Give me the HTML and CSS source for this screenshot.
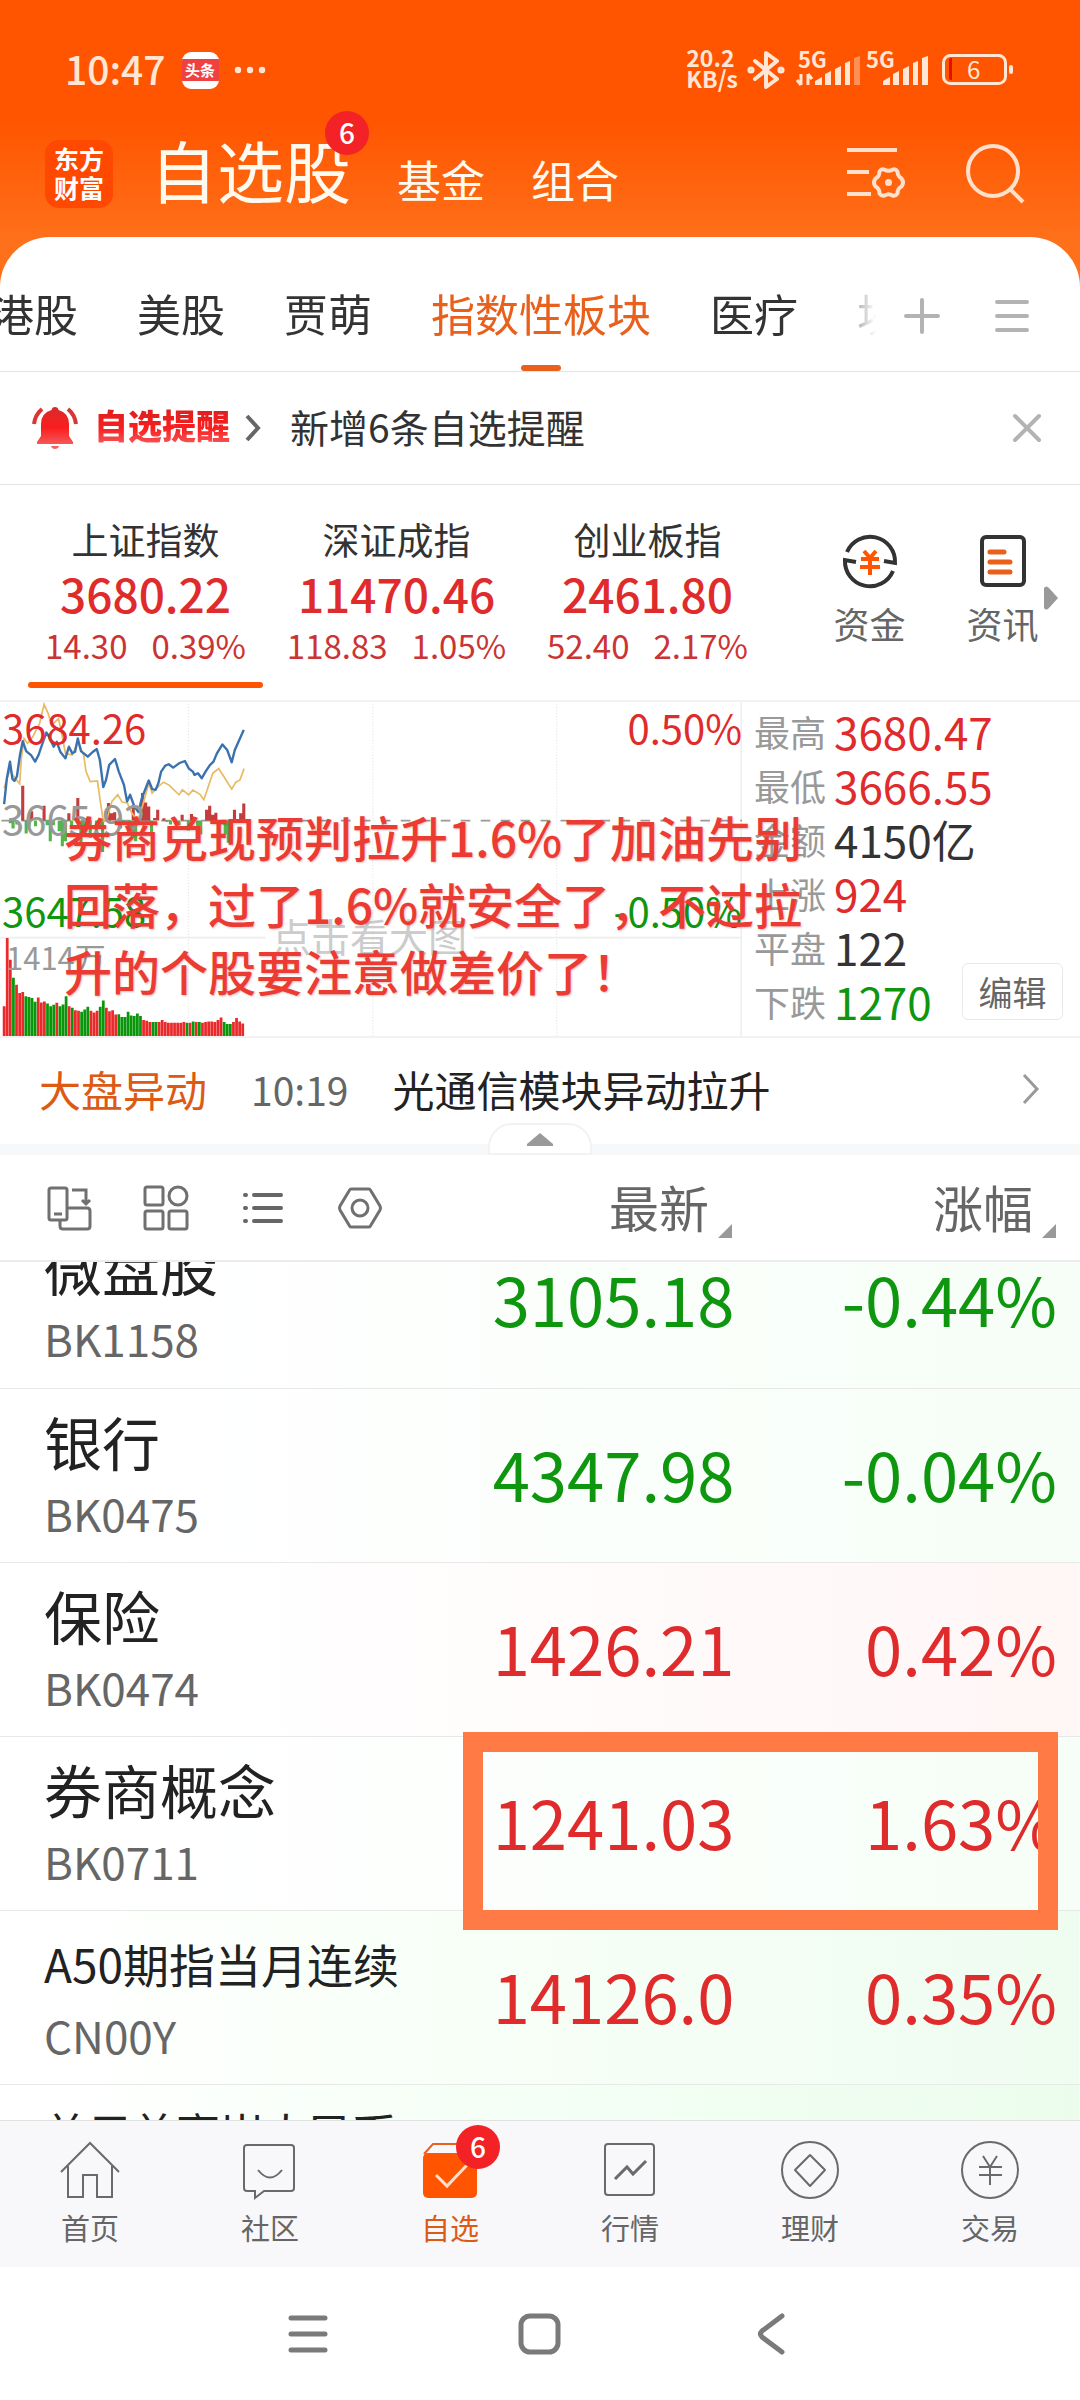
FILE: index.html
```html
<!DOCTYPE html>
<html lang="zh-CN">
<head>
<meta charset="utf-8">
<meta name="viewport" content="width=device-width, initial-scale=1">
<title>自选股</title>
<link rel="stylesheet" href="styles.css">
</head>
<body>
<div class="app">
  <header class="top">
    <div class="status">
      <span class="clock">10:47</span>
      <span class="toutiao"><span class="toutiao-band">头条</span></span>
      <svg class="dots" width="32" height="8" viewBox="0 0 32 8" fill="#ffe6d5"><circle cx="4" cy="4" r="3.2"/><circle cx="16" cy="4" r="3.2"/><circle cx="28" cy="4" r="3.2"/></svg>
      <span class="speed">20.2<br>KB/s</span>
      <svg class="bt" width="38" height="42" viewBox="0 0 38 42" fill="none" stroke="#ffe6d5" stroke-width="4" stroke-linejoin="round" stroke-linecap="round"><path d="M8 12l22 18-11 8V4l11 8L8 30"/><circle cx="4" cy="21" r="1.6"/><circle cx="34" cy="21" r="1.6"/></svg>
      <svg width="220" height="40" viewBox="0 0 220 40" fill="#ffe6d5" overflow="visible">
        <g class="net"><text x="3" y="18">5G</text><text x="71" y="18">5G</text></g>
        <path d="M6 24v11M6 35l-4-5M13 35V24M13 24l4 5" stroke="#ffe6d5" stroke-width="3" fill="none"/>
        <path d="M20 35v-4l7-4v8zM30 35V24l6-3v14zM40 35V19l6-3v19zM50 35V13l5-2v24zM88 35v-4l7-4v8zM98 35V24l6-3v14zM108 35V19l6-3v19zM118 35V13l5-2v24zM127 35V8l6-2v29z"/>
        <path d="M59 35V8l6-2v29z" opacity=".4"/>
        <rect x="148.500" y="5.500" width="62" height="28" rx="7" fill="none" stroke="#ffe6d5" stroke-width="3"/>
        <path d="M154 10q0-2 3-2v22q-3 0-3-2z" fill="#e60f00"/><rect x="214" y="15" width="4" height="9" rx="2"/>
        <text x="172" y="29" font-size="24">6</text>
      </svg>
    </div>
    <div class="title-bar">
      <span class="logo">东方<br>财富</span>
      <nav class="sections">
        <a class="section section-on" href="#">自选股<span class="badge">6</span></a>
        <a class="section" href="#">基金</a>
        <a class="section" href="#">组合</a>
      </nav>
      <button class="icon-btn" aria-label="设置">
        <svg width="60" height="60" viewBox="0 0 60 60" fill="none" stroke="#ffe0cc" stroke-width="4"><path d="M1 6h50M1 28h22M1 50h24"/><path d="M38 25.500q4.500 2.500 9 0 2.500-1 4.500 2 0 4.500 4 7 3 4 0 8-4 2-4 7-2 3-5 2-4-2.500-8 0-3 1-5-2 0-5-4-7-3-4 0-8 4-2 4-7 2-3 4.500-2z" stroke-linejoin="round"/><circle cx="42.500" cy="38.500" r="2" fill="#ffe0cc" stroke-width="3"/></svg>
      </button>
      <button class="icon-btn" aria-label="搜索">
        <svg width="60" height="60" viewBox="0 0 60 60" fill="none" stroke="#ffe0cc" stroke-width="4"><circle cx="27" cy="27" r="25"/><path d="M44 45l13 13"/></svg>
      </button>
    </div>
  </header>

  <main class="panel">
    <div class="tab-row">
      <nav class="tabs">
        <a href="#">港股</a><a href="#">美股</a><a href="#">贾萌</a><a class="tab-on" href="#">指数性板块</a><a href="#">医疗</a><a href="#">块</a>
      </nav>
      <button class="icon-btn" aria-label="添加分组"><svg width="38" height="38" viewBox="0 0 38 38" stroke="#b3b3b3" stroke-width="4" stroke-linecap="round"><path d="M19 3v32M3 19h32"/></svg></button>
      <button class="icon-btn" aria-label="分组列表"><svg width="38" height="38" viewBox="0 0 38 38" stroke="#b3b3b3" stroke-width="4" stroke-linecap="round"><path d="M4 5h30M4 19h30M4 33h30"/></svg></button>
    </div>

    <div class="alert">
      <svg width="46" height="44" viewBox="0 0 46 44"><defs><linearGradient id="bell" x1="0" y1="0" x2="0" y2="1"><stop offset="0" stop-color="#d92b2b"/><stop offset=".5" stop-color="#fa1e1e"/><stop offset="1" stop-color="#f26a6a"/></linearGradient></defs><path fill="url(#bell)" d="M23 1q3 0 3.500 3Q37 7 37 18v12l4 6v2H5v-2l4-6V18Q9 7 19.500 4 20 1 23 1zM19 40h8q-1 3-4 3t-4-3z"/><path d="M10 3Q3 9 2 18M36 3q7 6 8 15" fill="none" stroke="#d93636" stroke-width="4"/></svg>
      <a class="alert-tag" href="#">自选提醒</a>
      <svg width="18" height="28" viewBox="0 0 18 28" fill="none" stroke="#666" stroke-width="4"><path d="M3 2l11 12L3 26"/></svg>
      <span class="alert-text">新增6条自选提醒</span>
      <button class="icon-btn" aria-label="关闭"><svg width="30" height="30" viewBox="0 0 30 30" stroke="#b3b3b3" stroke-width="4" stroke-linecap="round"><path d="M3 3l24 24M27 3L3 27"/></svg></button>
    </div>

    <section class="indices">
      <a class="index index-on" href="#"><span class="index-name">上证指数</span><span class="index-price">3680.22</span><span class="index-chg"><span>14.30</span><span>0.39%</span></span></a>
      <a class="index" href="#"><span class="index-name">深证成指</span><span class="index-price">11470.46</span><span class="index-chg"><span>118.83</span><span>1.05%</span></span></a>
      <a class="index" href="#"><span class="index-name">创业板指</span><span class="index-price">2461.80</span><span class="index-chg"><span>52.40</span><span>2.17%</span></span></a>
      <a class="tool tool-first" href="#">
        <svg width="58" height="58" viewBox="0 0 58 58" fill="none" stroke="#333" stroke-width="4"><path d="M6 20a25 25 0 0 1 48 11l-11-2M52 39A25 25 0 0 1 4 28l11 2"/><path d="M23 19l6 7 6-7M20 27h18M19 35h20M29 27v16" stroke="#ff5500"/></svg>
        资金</a>
      <a class="tool" href="#">
        <svg width="58" height="58" viewBox="0 0 58 58" fill="none" stroke="#333" stroke-width="4"><rect x="8" y="5" width="42" height="48" rx="4"/><path d="M16 20h14M16 30h20M16 40h20" stroke="#e8601c" stroke-width="5" stroke-linecap="round"/></svg>
        资讯</a>
      <svg class="more" width="14" height="24" viewBox="0 0 14 24" fill="#999"><path d="M0 2q2-3 5 0l9 10-9 10q-3 3-5 0z"/></svg>
    </section>

    <section class="market">
      <div class="chart">
        <svg class="plot" viewBox="0 30 2155 1008" preserveAspectRatio="none" fill="none">
          <path d="M547 36V1038M1083 36V1038M1617 36V1038" stroke="#e6e6e6" stroke-width="3" stroke-dasharray="4 5"/>
          <path d="M0 741H772M1376 741H2155M2153 30V1038" stroke="#eee" stroke-width="5"/>
          <path d="M4 388H2155" stroke="#999" stroke-width="5" stroke-dasharray="28 30"/>
          <path stroke="#c43c3c" stroke-width="9" d="M66 388V283M92 388V360M128 388V343M200 388V366M226 388V320M252 388V380M315 388V335M324 388V366M333 388V363M387 388V350M414 388V305M423 388V333M432 388V345M449 388V380M458 388V355M476 388V381M529 388V370M556 388V368M600 388V355M609 388V343M618 388V370M627 388V364M681 388V355M699 388V366M708 388V336"/>
          <path stroke="#54b54a" stroke-width="9" d="M30 388V396M38 388V412M49 388V400M76 388V427M85 388V405M103 388V405M137 388V402M146 388V450M155 388V402M172 388V420M181 388V465M190 388V450M208 388V405M235 388V456M244 388V420M262 388V440M280 388V430M289 388V410M298 388V483M350 388V412M359 388V400M376 388V420M385 388V440M394 388V450M440 388V430M485 388V392M495 388V400M520 388V402M547 388V418M574 388V420M583 388V430M645 388V400M654 388V430M663 388V455M672 388V430"/>
          <path stroke="#ea2a2a" stroke-width="8" d="M12 1038V948M21 1038V742M30 1038V808M48 1038V883M57 1038V908M66 1038V905M111 1038V922M120 1038V937M129 1038V934M165 1038V938M201 1038V948M219 1038V960M228 1038V962M264 1038V962M273 1038V967M282 1038V962M309 1038V953M318 1038V963M327 1038V960M336 1038V973M417 1038V990M426 1038V992M435 1038V996M462 1038V996M471 1038V990M480 1038V996M489 1038V998M498 1038V998M507 1038V998M516 1038V998M525 1038V998M534 1038V996M552 1038V998M570 1038V996M588 1038V998M597 1038V996M606 1038V994M615 1038V994M624 1038V996M633 1038V990M642 1038V982M678 1038V996M687 1038V984M696 1038V994M705 1038V1000"/>
          <path stroke="#0a960a" stroke-width="8" d="M39 1038V862M75 1038V918M84 1038V920M93 1038V923M102 1038V935M138 1038V940M147 1038V948M156 1038V944M174 1038V948M183 1038V943M192 1038V918M210 1038V953M237 1038V965M246 1038V958M255 1038V950M291 1038V950M300 1038V931M345 1038V972M354 1038V981M363 1038V981M372 1038V965M381 1038V976M390 1038V978M399 1038V970M408 1038V978M444 1038V996M453 1038V996M543 1038V998M561 1038V994M579 1038V996M651 1038V996M660 1038V1002M669 1038V1002"/>
          <polyline stroke="#e9bb62" stroke-width="5" points="12,290 20,262 29,235 40,255 57,277 62,200 70,140 80,155 95,135 105,115 115,95 128,37 140,65 150,100 170,80 180,130 190,185 210,190 226,150 243,190 250,240 262,270 283,268 290,320 300,390 310,385 325,330 342,310 355,332 370,335 380,360 400,390 415,340 432,275 442,305 460,285 475,272 490,280 520,310 530,295 548,310 560,296 580,308 592,325 605,285 618,245 635,231 650,255 673,293 685,272 697,265 709,231"/>
          <polyline stroke="#3a72b0" stroke-width="7" stroke-linejoin="round" points="12,338 20,260 29,210 36,262 42,268 49,255 58,190 66,148 76,178 90,190 102,210 112,190 125,150 135,122 145,140 156,165 165,150 175,180 190,200 200,165 210,185 218,180 226,140 235,178 255,195 270,180 281,172 290,205 300,287 308,265 317,220 334,202 345,240 360,280 369,330 378,310 390,345 402,362 412,320 432,267 442,293 452,295 460,275 468,240 480,222 490,218 503,228 520,215 537,208 548,230 560,240 565,250 575,245 586,260 597,240 610,220 620,210 630,185 646,158 660,175 673,212 682,175 708,114"/>
        </svg>
        <span class="mark mark-high up">3684.26</span><span class="mark mark-high mark-right up">0.50%</span>
        <span class="mark mark-mid">3665.92</span>
        <span class="mark mark-low down">3647.58</span><span class="mark mark-low mark-right down">-0.50%</span>
        <span class="mark mark-vol">1414万</span>
        <span class="mark mark-hint">点击看大图</span>
      </div>
      <dl class="stats">
        <div><dt>最高</dt><dd class="up">3680.47</dd></div>
        <div><dt>最低</dt><dd class="up">3666.55</dd></div>
        <div><dt>金额</dt><dd>4150亿</dd></div>
        <div><dt>上涨</dt><dd class="up">924</dd></div>
        <div><dt>平盘</dt><dd>122</dd></div>
        <div><dt>下跌</dt><dd class="down">1270</dd></div>
      </dl>
      <button class="edit">编辑</button>
      <p class="note">券商兑现预判拉升1.6%了加油先别<br>回落，过了1.6%就安全了，不过拉<br>升的个股要注意做差价了！</p>
    </section>

    <a class="news" href="#">
      <span class="news-tag">大盘异动</span><span class="news-time">10:19</span><span class="news-text">光通信模块异动拉升</span>
      <svg width="20" height="32" viewBox="0 0 20 32" fill="none" stroke="#999" stroke-width="3"><path d="M3 2l13 14L3 30"/></svg>
    </a>
    <div class="divider">
      <button class="fold" aria-label="收起"><svg width="26" height="13" viewBox="0 0 26 13" fill="#999"><path d="M13 0l13 11v2H0v-2z"/></svg></button>
    </div>

    <div class="list-head">
      <button class="icon-btn" aria-label="横屏"><svg width="46" height="46" viewBox="0 0 46 46" fill="none" stroke="#707070" stroke-width="3"><rect x="3" y="3" width="18" height="32" rx="2"/><path d="M8 29h8M26 5h14v14M36 15l4 4 4-4M14 35v6q0 3 3 3h24q3 0 3-3V26q0-3-3-3H21"/></svg></button>
      <button class="icon-btn" aria-label="宫格"><svg width="46" height="46" viewBox="0 0 46 46" fill="none" stroke="#707070" stroke-width="3"><rect x="2" y="2" width="18" height="18" rx="2"/><circle cx="35" cy="11" r="9"/><rect x="2" y="26" width="18" height="18" rx="2"/><rect x="26" y="26" width="18" height="18" rx="2"/></svg></button>
      <button class="icon-btn" aria-label="列表"><svg width="46" height="46" viewBox="0 0 46 46" fill="none" stroke="#666" stroke-width="4" stroke-linecap="round"><path d="M14 10h27M14 23h27M14 36h27M5 10h1M5 23h1M5 36h1"/></svg></button>
      <button class="icon-btn" aria-label="列表设置"><svg width="46" height="46" viewBox="0 0 46 46" fill="none" stroke="#707070" stroke-width="3"><path d="M14 4h18q1 0 2 2l9 15q1 2 0 4l-9 15q-1 2-2 2H14q-1 0-2-2L3 25q-1-2 0-4l9-15q1-2 2-2z"/><circle cx="23" cy="23" r="8"/></svg></button>
      <button class="sort">最新</button>
      <button class="sort">涨幅</button>
    </div>

    <div class="list">
      <table>
        <tbody>
          <tr class="tint-1"><th scope="row">微盘股<small>BK1158</small></th><td class="down">3105.18</td><td class="down">-0.44%</td></tr>
          <tr class="tint-1"><th scope="row">银行<small>BK0475</small></th><td class="down">4347.98</td><td class="down">-0.04%</td></tr>
          <tr class="tint-red"><th scope="row">保险<small>BK0474</small></th><td class="up">1426.21</td><td class="up">0.42%</td></tr>
          <tr class="tint-1"><th scope="row">券商概念<small>BK0711</small></th><td class="up">1241.03</td><td class="up">1.63%</td></tr>
          <tr class="tint-2"><th scope="row" class="long">A50期指当月连续<small>CN00Y</small></th><td class="up">14126.0</td><td class="up">0.35%</td></tr>
          <tr class="tint-3"><th scope="row" class="longer">美元兑离岸人民币</th><td></td><td></td></tr>
        </tbody>
      </table>
      <div class="frame"></div>
    </div>
  </main>

  <nav class="bottom">
    <a href="#"><svg width="62" height="62" viewBox="0 0 62 62"><path d="M2 32L31 3l29 29M9 26v31h15V35h14v22h15V26"/></svg>首页</a>
    <a href="#"><svg width="62" height="62" viewBox="0 0 62 62"><path d="M8 5h44q3 0 3 3v40q0 3-3 3H25l-9 7v-7H8q-3 0-3-3V8q0-3 3-3zM19 30q12 15 24 0"/></svg>社区</a>
    <a class="bottom-on" href="#"><svg width="62" height="62" viewBox="0 0 62 62"><path d="M5 14l9-10h34l9 10" stroke="#e8601c"/><rect x="4" y="13" width="54" height="45" rx="5" fill="#ff5500" stroke="none"/><path d="M17 35l11 11 20-21" stroke="#ffe0cc" stroke-width="3"/></svg>自选<span class="badge">6</span></a>
    <a href="#"><svg width="62" height="62" viewBox="0 0 62 62"><rect x="6" y="4" width="49" height="51" rx="3"/><path d="M16 39l12-12 6 7 13-13" stroke-width="3"/></svg>行情</a>
    <a href="#"><svg width="62" height="62" viewBox="0 0 62 62"><circle cx="31" cy="30" r="28"/><path d="M31 15l15 15-15 16-15-16z" stroke-linejoin="round"/></svg>理财</a>
    <a href="#"><svg width="62" height="62" viewBox="0 0 62 62"><circle cx="31" cy="30" r="28"/><path d="M24 16l7 11 7-11M20 27h23M20 35h23M31 27v18"/></svg>交易</a>
  </nav>
  <div class="sysnav">
    <button class="icon-btn" aria-label="最近任务"><svg width="44" height="44" viewBox="0 0 44 44"><path d="M5 6h34M5 22h34M5 38h34"/></svg></button>
    <button class="icon-btn" aria-label="主屏幕"><svg width="44" height="44" viewBox="0 0 44 44"><rect x="3" y="4" width="37" height="36" rx="9"/></svg></button>
    <button class="icon-btn" aria-label="返回"><svg width="44" height="44" viewBox="0 0 44 44"><path d="M32 4L12 19q-3 3 0 6l20 15"/></svg></button>
  </div>
</div>
</body>
</html>
```
FILE: styles.css
```css
* { box-sizing: border-box; }
body {
  margin: 0;
  font-family: "Noto Sans CJK SC", sans-serif;
  color: #333;
  background: #fff;
}
a { color: inherit; text-decoration: none; }
button { font: inherit; color: inherit; background: none; border: 0; padding: 0; }
svg { display: block; flex: none; }
.icon-btn { display: block; flex: none; }
.up { color: #df2b2b; }
.down { color: #0f960f; }

.app { display: flex; flex-direction: column; height: 100vh; }

/* Header */
.top {
  height: 300px;
  margin-bottom: -63px;
  background: linear-gradient(#ff5500 120px, #ff701a 240px);
  flex: none;
}
.status {
  display: flex;
  align-items: center;
  height: 140px;
  padding: 0 65px;
  color: #ffe6d5;
}
.clock { padding-bottom: 4px; font-size: 39px; font-weight: 500; line-height: 48px; }
.toutiao {
  display: flex;
  align-items: center;
  width: 37px;
  height: 37px;
  margin-left: 16px;
  border-radius: 9px;
  background: #fff;
  overflow: hidden;
}
.toutiao-band {
  width: 100%;
  background: #f04142;
  color: #fff;
  font-size: 15px;
  font-weight: 700;
  line-height: 22px;
  text-align: center;
}
.dots { margin-left: 15px; }
.speed { margin-left: auto; padding-bottom: 4px; font-size: 23px; font-weight: 700; line-height: 21px; }
.bt { margin: 0 10px 0 9px; }
.net { font-size: 22px; font-weight: 700; }
.title-bar {
  display: flex;
  align-items: center;
  height: 68px;
  padding: 0 54px 0 45px;
}
.title-bar .icon-btn { margin-left: 60px; }
.logo {
  width: 68px;
  height: 68px;
  padding: 4px 0;
  border-radius: 14px;
  background: #ff4800;
  color: #fff;
  font-size: 25px;
  font-weight: 700;
  line-height: 29px;
  text-align: center;
}
.sections {
  display: flex;
  align-items: baseline;
  gap: 46px;
  flex: 1;
  margin-left: 37px;
  color: #fffaf0;
  line-height: 68px;
}
.section { position: relative; font-size: 44px; }
.section-on { font-size: 67px; }
.badge {
  position: absolute;
  width: 44px;
  height: 44px;
  border-radius: 50%;
  background: #f22226;
  color: #fff;
  font-size: 28px;
  font-weight: 500;
  line-height: 42px;
  text-align: center;
}
.section .badge { top: -24px; right: -18px; }

/* Content panel */
.panel {
  display: flex;
  flex-direction: column;
  flex: 1;
  min-height: 0;
  border-radius: 50px 50px 0 0;
  background: #fff;
}
.tab-row {
  display: flex;
  align-items: center;
  gap: 52px;
  height: 135px;
  padding: 24px 49px 0 0;
  border-bottom: 1px solid #e4e4e4;
  flex: none;
}
.tabs {
  display: flex;
  flex: 1;
  gap: 59px;
  height: 110px;
  min-width: 0;
  margin-right: -25px;
  overflow: hidden;
  font-size: 44px;
  line-height: 104px;
  white-space: nowrap;
  -webkit-mask-image: linear-gradient(to left, transparent, #000 50px);
  mask-image: linear-gradient(to left, transparent, #000 50px);
}
.tabs a { flex: none; }
.tabs a:first-child { margin-left: -10px; }
.tab-on { position: relative; color: #e8601c; }
.tab-on::after {
  content: "";
  position: absolute;
  left: 50%;
  bottom: 0;
  width: 40px;
  height: 6px;
  margin-left: -20px;
  border-radius: 3px;
  background: #e8601c;
}
.alert {
  display: flex;
  align-items: center;
  height: 113px;
  padding: 0 38px 0 32px;
  border-bottom: 1px solid #e4e4e4;
  flex: none;
}
.alert-tag {
  margin: 0 14px 0 16px;
  padding-bottom: 6px;
  background: linear-gradient(#e01f1f 20%, #fa1e1e 50%, #f26a6a 90%);
  -webkit-background-clip: text;
  background-clip: text;
  color: transparent;
  font-size: 34px;
  font-weight: 900;
  line-height: 48px;
}
.alert-text { flex: 1; margin-left: 28px; padding-bottom: 4px; font-size: 39px; line-height: 48px; }

.indices {
  display: grid;
  grid-template-columns: 251fr 251fr 251fr 30fr 133fr 133fr;
  position: relative;
  height: 215px;
  padding: 30px 11px 0 20px;
  flex: none;
}
.index { display: flex; flex-direction: column; align-items: center; position: relative; }
.index-on::after {
  content: "";
  position: absolute;
  left: 8px;
  right: 8px;
  bottom: 12px;
  height: 6px;
  border-radius: 3px;
  background: #ff5500;
}
.index-name { font-size: 37px; line-height: 48px; }
.index-price { font-size: 46px; font-weight: 500; line-height: 60px; color: #df2b2b; }
.index-chg { display: flex; gap: 24px; font-size: 33px; line-height: 44px; color: #cc3333; }
.tool {
  display: flex;
  flex-direction: column;
  align-items: center;
  gap: 10px;
  padding-top: 17px;
  color: #666;
  font-size: 36px;
  line-height: 46px;
}
.tool-first { grid-column: 5; }
.more { position: absolute; right: 22px; top: 101px; }

/* Minute chart and market figures */
.market {
  display: grid;
  grid-template-columns: 742fr 338fr;
  position: relative;
  height: 338px;
  border-top: 2px solid #f2f2f2;
  border-bottom: 2px solid #f2f2f2;
  flex: none;
}
.chart { position: relative; }
.plot { width: 100%; height: 334px; }
.mark { position: absolute; left: 2px; font-size: 40px; line-height: 40px; }
.mark-high { top: 5px; }
.mark-mid { top: 96px; color: #999; }
.mark-low { top: 188px; }
.mark-vol { top: 235px; left: 6px; color: #999; font-size: 31px; }
.mark-hint { top: 213px; left: 272px; color: #ccc; font-size: 39px; }
.mark-right { left: auto; right: 0; }
.stats { margin: 0; padding: 2px 0 0 12px; }
.stats div { display: flex; align-items: center; gap: 8px; height: 54px; }
dt { color: #999; font-size: 36px; line-height: 54px; }
dd { margin: 0; font-size: 44px; line-height: 54px; }
.edit {
  position: absolute;
  right: 17px;
  bottom: 16px;
  width: 101px;
  height: 57px;
  border: 1px solid #e8e8e8;
  border-radius: 6px;
  background: #fff;
  color: #666;
  font-size: 34px;
  line-height: 50px;
}
.note {
  position: absolute;
  left: 64px;
  top: 101px;
  margin: 0;
  color: #ec3b33;
  font-size: 48px;
  font-weight: 500;
  line-height: 67px;
  white-space: nowrap;
  text-shadow: 1px 1px 2px rgba(120, 0, 0, .25);
}

.news {
  display: flex;
  align-items: center;
  height: 106px;
  padding: 0 39px 4px;
  font-size: 42px;
  line-height: 60px;
  flex: none;
}
.news-tag { color: #dd5a14; }
.news-time { margin: 0 44px; color: #666; font-size: 39px; }
.news-text { flex: 1; color: #222; }
.divider {
  display: flex;
  justify-content: center;
  align-items: flex-end;
  height: 11px;
  background: #f7f8fa;
  flex: none;
}
.fold {
  display: flex;
  justify-content: center;
  align-items: center;
  width: 104px;
  height: 32px;
  border: 2px solid #f2f2f2;
  border-radius: 24px 24px 0 0;
  background: #fff;
  flex: none;
}

/* Watch list */
.list-head {
  display: flex;
  align-items: center;
  gap: 51px;
  height: 107px;
  padding: 0 24px 0 46px;
  border-bottom: 2px solid #ececec;
  color: #666;
  flex: none;
}
.sort {
  position: relative;
  width: 273px;
  padding: 0 23px 4px 0;
  font-size: 50px;
  line-height: 60px;
  text-align: right;
}
.sort:nth-of-type(5) { margin-left: auto; }
.sort::after {
  content: "";
  position: absolute;
  right: 0;
  bottom: 2px;
  border-left: 14px solid transparent;
  border-bottom: 14px solid #999;
}
.list { position: relative; flex: 1; min-height: 0; overflow: hidden; }
table { width: 100%; margin-top: -48px; border-collapse: collapse; table-layout: fixed; }
tr { height: 174px; border-bottom: 1px solid #e8e8e8; }
th, td { padding: 0; font-weight: 400; }
th {
  padding: 12px 0 0 44px;
  color: #222;
  font-size: 58px;
  line-height: 80px;
  text-align: left;
  vertical-align: top;
  white-space: nowrap;
}
th.long { font-size: 46px; }
th.longer { font-size: 44px; line-height: 70px; }
small { display: block; color: #666; font-size: 44px; line-height: 64px; }
td { width: 25%; padding-bottom: 5px; font-size: 67px; line-height: 80px; text-align: right; }
td:nth-child(3) { width: 32%; padding-right: 23px; }
.tint-1 { background: linear-gradient(to right, #fff 10%, #f6fef7); }
.tint-2 { background: linear-gradient(to right, #fff 5%, #f8fff8 40%, #effcf0); }
.tint-3 { background: linear-gradient(to right, #fff 5%, #f4fff5 50%, #ebfcec); }
.tint-red { background: linear-gradient(to right, #fff 20%, #fff6f6); }
.frame {
  position: absolute;
  top: 470px;
  left: 463px;
  right: 22px;
  height: 198px;
  border: 20px solid #ff7a45;
}

/* Bottom bars */
.bottom {
  display: grid;
  grid-template-columns: repeat(6, 1fr);
  height: 147px;
  border-top: 1px solid #dfe3df;
  background: #f8f8fb;
  color: #666;
  font-size: 29px;
  line-height: 44px;
  flex: none;
}
.bottom a {
  display: flex;
  flex-direction: column;
  align-items: center;
  gap: 3px;
  position: relative;
  padding-top: 19px;
}
.bottom svg { fill: none; stroke: #6a6a6a; stroke-width: 2; }
.bottom .bottom-on { color: #dd5a14; }
.bottom .badge { top: 4px; left: 50%; margin-left: 6px; }
.sysnav {
  display: flex;
  justify-content: center;
  align-items: center;
  gap: 188px;
  height: 133px;
  flex: none;
}
.sysnav svg { fill: none; stroke: #7a7a7a; stroke-width: 5; stroke-linecap: round; }
```
